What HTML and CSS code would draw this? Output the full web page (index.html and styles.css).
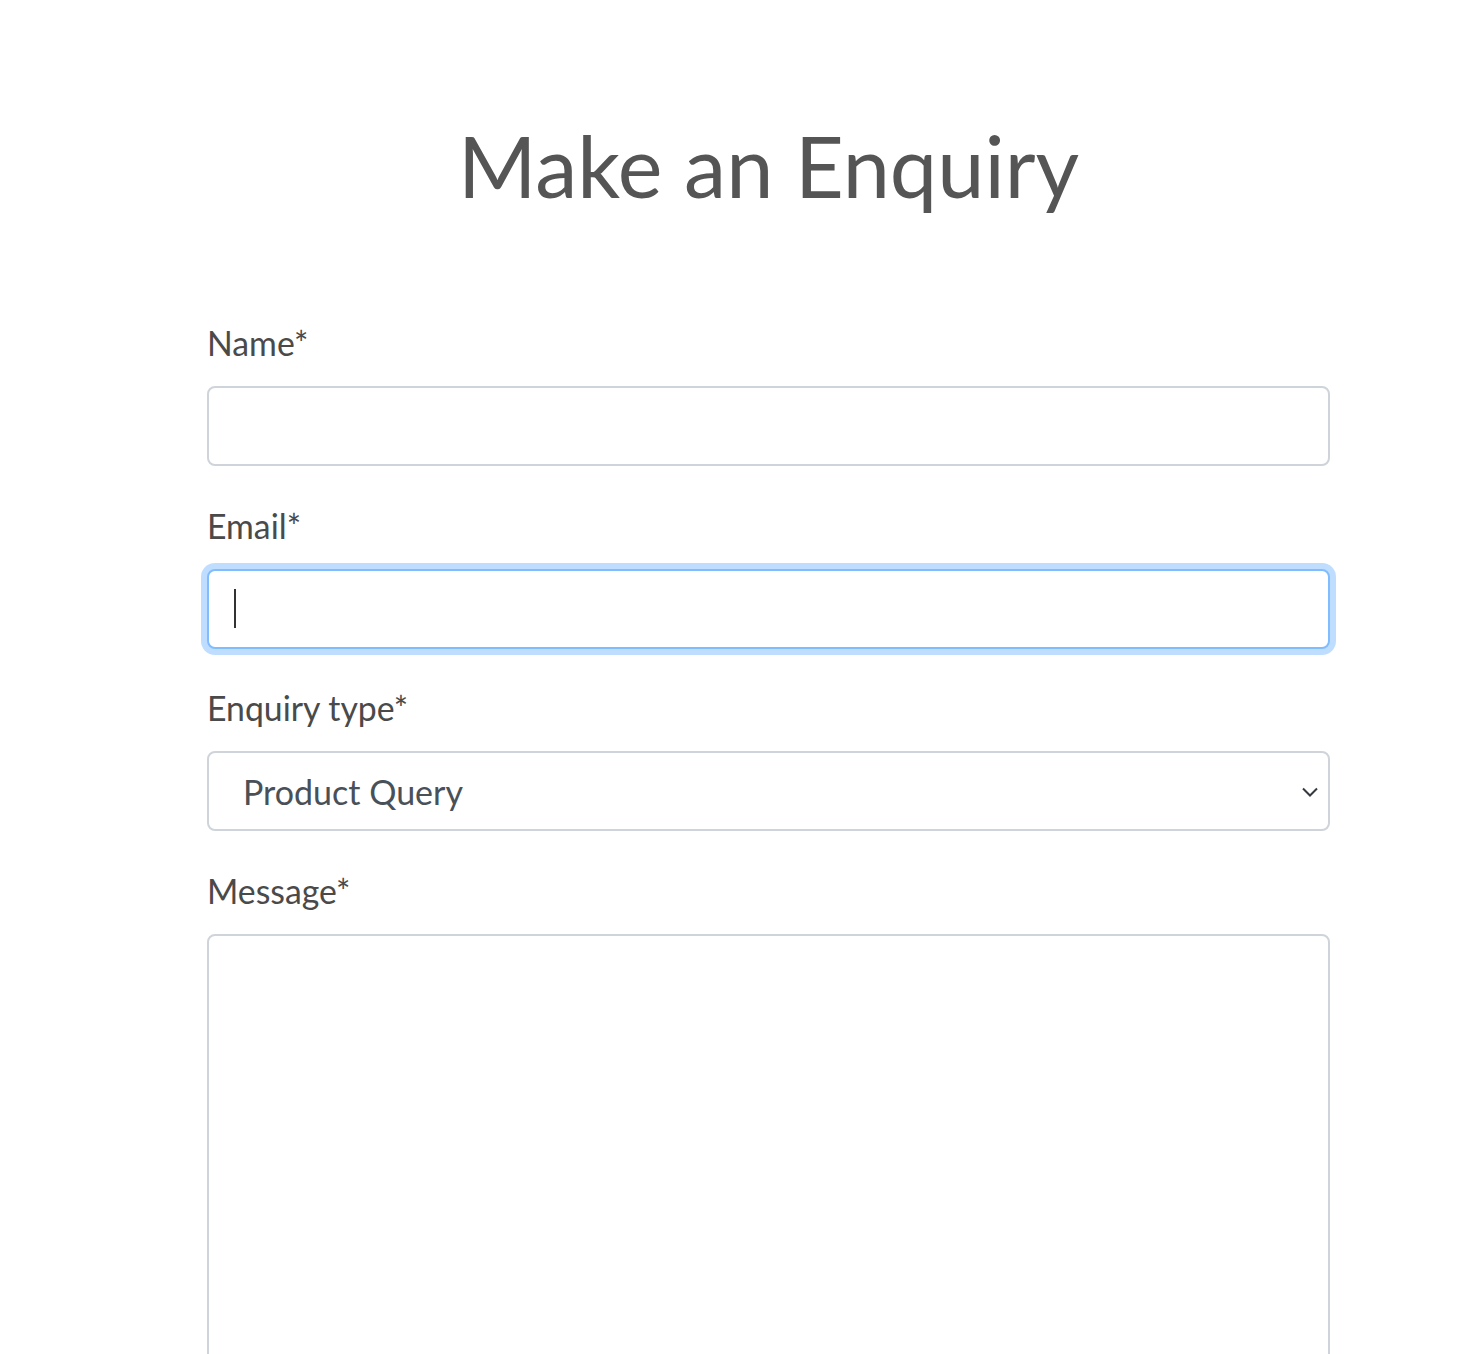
FILE: index.html
```html
<!DOCTYPE html>
<html lang="en">
<head>
<meta charset="utf-8">
<title>Make an Enquiry</title>
<link rel="stylesheet" href="styles.css">
</head>
<body>
<div class="page">
  <main class="container">
    <h1 class="title">Make an Enquiry</h1>
    <form class="form">
      <div class="group">
        <label class="label" for="name">Name*</label>
        <input class="control" id="name" type="text">
      </div>
      <div class="group">
        <label class="label" for="email">Email*</label>
        <div class="control-wrap">
          <input class="control is-focused" id="email" type="email">
          <span class="caret"></span>
        </div>
      </div>
      <div class="group">
        <label class="label" for="type">Enquiry type*</label>
        <div class="control-wrap">
          <select class="control select" id="type">
            <option>Product Query</option>
            <option>General</option>
          </select>
          <svg class="chevron" width="16" height="10" viewBox="0 0 16 10" aria-hidden="true"><path d="M1 1.5 L8 8.5 L15 1.5" fill="none" stroke="#343a40" stroke-width="2"/></svg>
        </div>
      </div>
      <div class="group">
        <label class="label" for="message">Message*</label>
        <textarea class="control textarea" id="message"></textarea>
      </div>
    </form>
  </main>
</div>
</body>
</html>
```

FILE: styles.css
```css
html, body {
  margin: 0;
  padding: 0;
  background: #fff;
}
body {
  font-family: Lato, "Open Sans", sans-serif;
  overflow: hidden;
}
.page {
  padding-left: 65px;
}
.container {
  width: 1123px;
  margin: 0 auto;
}
.title {
  margin: 115px 0 0;
  font-size: 84.6px;
  font-weight: 400;
  line-height: 100px;
  color: #555;
  text-align: center;
}
.form {
  margin-top: 105px;
}
.group {
  margin-bottom: 36.7px;
}
.label {
  display: block;
  font-size: 33.8px;
  line-height: 46px;
  color: #4a4a4a;
  margin-bottom: 20px;
}
.control-wrap {
  position: relative;
}
.control {
  display: block;
  box-sizing: border-box;
  width: 100%;
  height: 80px;
  padding: 0 26px;
  border: 2px solid #ced4da;
  border-radius: 8px;
  background: #fff;
  font-family: Lato, sans-serif;
  font-size: 34px;
  color: #495057;
  outline: none;
  margin: 0;
}
.is-focused {
  border-color: #80bdff;
  box-shadow: 0 0 0 6px rgba(0, 123, 255, 0.25);
}
.caret {
  position: absolute;
  left: 27px;
  top: 20px;
  width: 2px;
  height: 39px;
  background: #333;
}
.select {
  appearance: none;
  -webkit-appearance: none;
  padding-left: 34px;
}
.chevron {
  position: absolute;
  right: 12px;
  top: 36px;
  pointer-events: none;
}
.textarea {
  height: 500px;
  resize: none;
  padding-top: 12px;
}
```
